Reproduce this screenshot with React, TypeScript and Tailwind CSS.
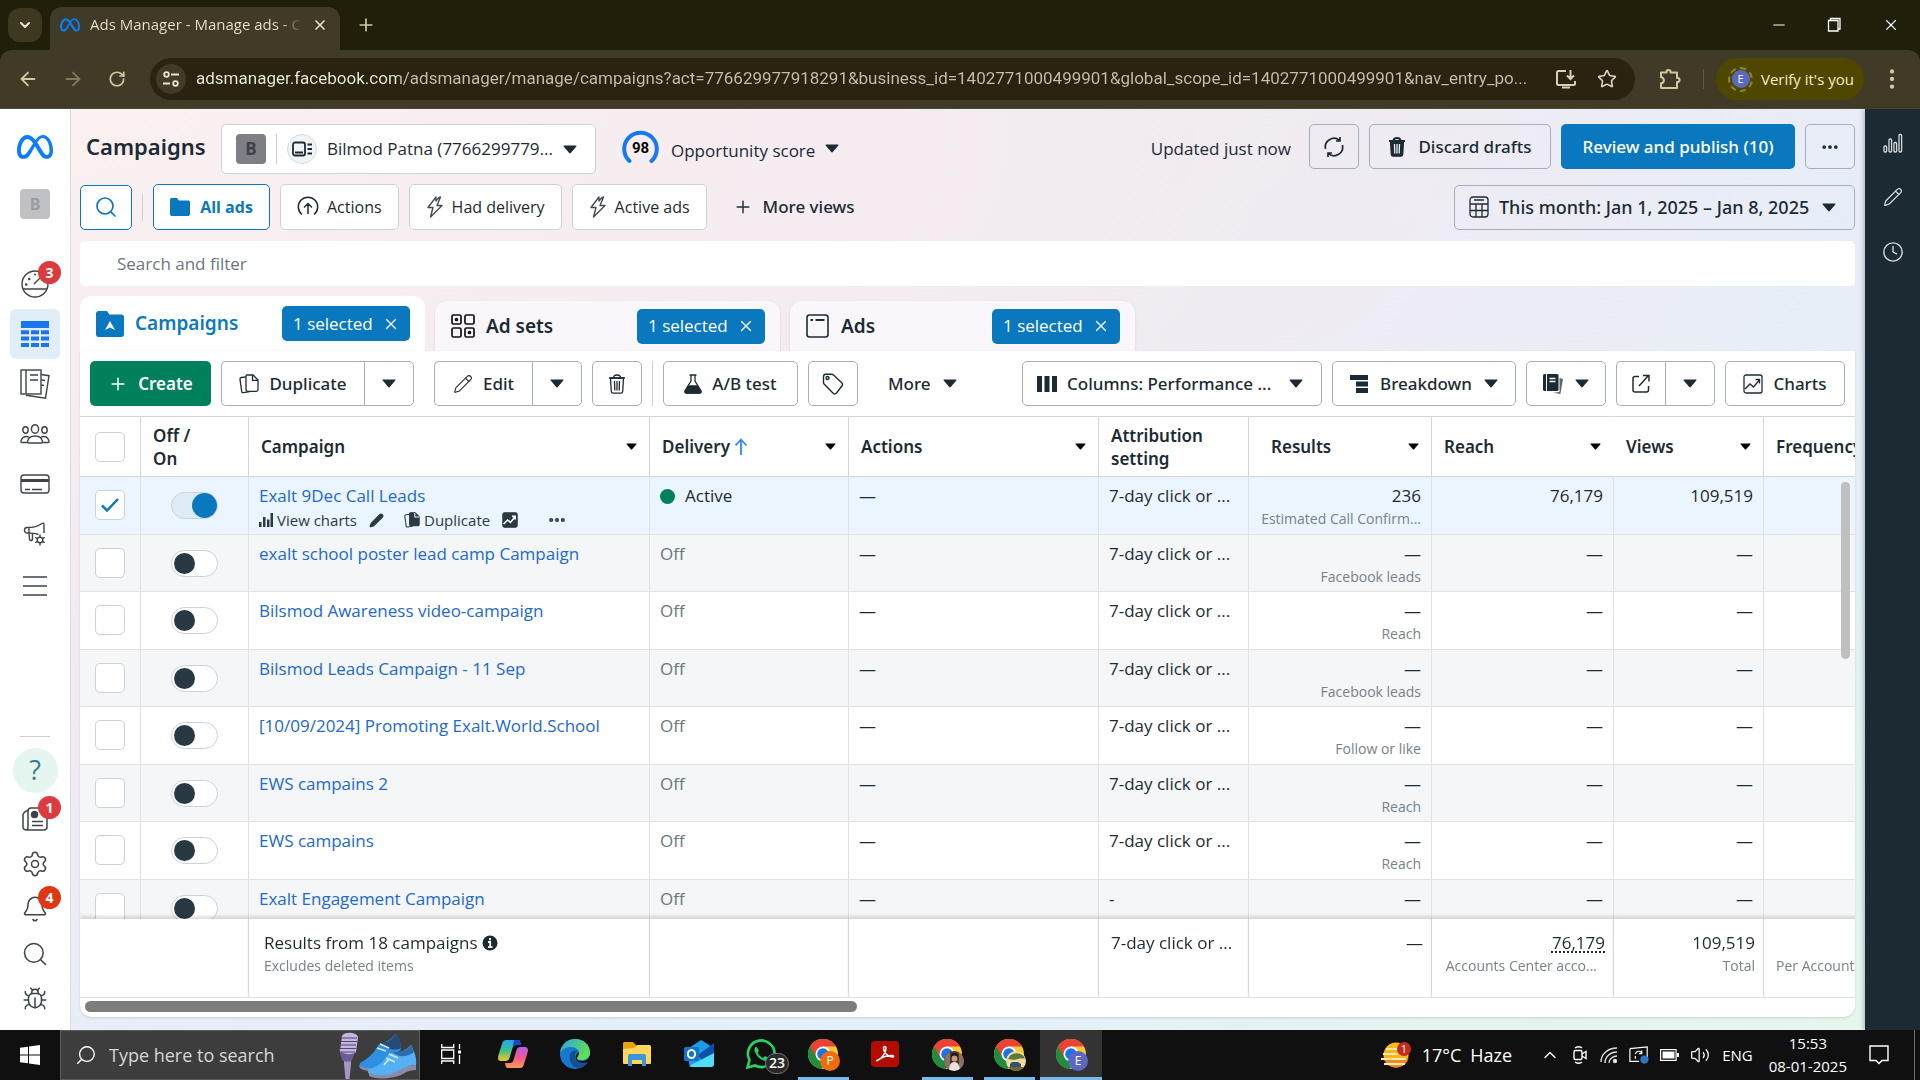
import type { ReactNode } from "react";
import { FaMeta } from "react-icons/fa6";
import {
  ArrowLeft,
  ArrowRight,
  Bell,
  Bug,
  ChevronDown,
  ChevronUp,
  Clock,
  Ellipsis,
  EllipsisVertical,
  Minus,
  Pencil,
  Plus,
  RotateCw,
  Search,
  Settings,
  Star,
  Volume2,
  X,
} from "lucide-react";

type Campaign = {
  name: string;
  active?: boolean;
  attribution: string;
  results: string;
  resultType: string;
  reach: string;
  views: string;
};

const ATTR = "7-day click or ...";

const campaigns: Campaign[] = [
  { name: "Exalt 9Dec Call Leads", active: true, attribution: ATTR, results: "236", resultType: "Estimated Call Confirm...", reach: "76,179", views: "109,519" },
  { name: "exalt school poster lead camp Campaign", attribution: ATTR, results: "—", resultType: "Facebook leads", reach: "—", views: "—" },
  { name: "Bilsmod Awareness video-campaign", attribution: ATTR, results: "—", resultType: "Reach", reach: "—", views: "—" },
  { name: "Bilsmod Leads Campaign - 11 Sep", attribution: ATTR, results: "—", resultType: "Facebook leads", reach: "—", views: "—" },
  { name: "[10/09/2024] Promoting Exalt.World.School", attribution: ATTR, results: "—", resultType: "Follow or like", reach: "—", views: "—" },
  { name: "EWS campains 2", attribution: ATTR, results: "—", resultType: "Reach", reach: "—", views: "—" },
  { name: "EWS campains", attribution: ATTR, results: "—", resultType: "Reach", reach: "—", views: "—" },
  { name: "Exalt Engagement Campaign", attribution: "-", results: "—", resultType: "", reach: "—", views: "—" },
];

function Caret({ small }: { small?: boolean }) {
  return (
    <svg viewBox="0 0 14 9" className={small ? "h-[7px] w-[11px] shrink-0 text-black" : "h-[9px] w-[14px] shrink-0"}>
      <path d="M1.2 0.5h11.6c.6 0 .9.6.5 1L7.8 8c-.4.5-1.200.5-1.600 0L.7 1.500c-.4-.4-.1-1 .5-1z" fill="currentColor" />
    </svg>
  );
}

/* ---------- small drawings ---------- */

function Trash({ dark }: { dark?: boolean }) {
  return (
    <svg viewBox="0 0 18 20" className="h-5 w-[18px]" fill="none" stroke="currentColor" strokeWidth="1.3">
      <path d="M1 4h16M5.500 4c0-2 1-3 3.500-3s3.500 1 3.500 3" strokeWidth={dark ? 2 : 1.300} />
      <path d="M2.500 4l.8 13.500c.1 1 .8 1.700 1.800 1.700h7.800c1 0 1.700-.7 1.800-1.700L15.500 4z" fill={dark ? "currentColor" : "none"} />
      <path d="M6.500 7l.3 9.500M9 7v9.500M11.500 7l-.3 9.500" stroke={dark ? "#eceef8" : "currentColor"} />
    </svg>
  );
}

function Copy({ solid }: { solid?: boolean }) {
  return (
    <svg viewBox="0 0 20 20" className={solid ? "h-4 w-4" : "h-5 w-5"} fill="none" stroke="currentColor" strokeWidth="1.300">
      <path d="M8 1h6l5 5v9.500c0 1-.7 1.800-1.700 1.800H8.800c-1 0-1.800-.8-1.800-1.800V2.500C7 1.500 7.300 1 8 1z" fill={solid ? "currentColor" : "none"} />
      <path d="M13.500 1.300v5H19" stroke={solid ? "#edf5fe" : "currentColor"} />
      <path d="M7 2.800L2.300 3.500C1.300 3.700.9 4.400 1 5.300l1.700 12c.1 1 .8 1.500 1.700 1.400l6.300-1" />
    </svg>
  );
}

function Bolt() {
  return (
    <svg viewBox="0 0 18 22" className="h-[22px] w-[18px]" fill="none" stroke="#3f4c54" strokeWidth="1.400" strokeLinejoin="round">
      <path d="M10 1L2 11.500h5L4.500 21 16 9.500h-5L14.500 1c-1.500 0-3 2-4.500 4z" />
    </svg>
  );
}

function BarsIcon({ className }: { className: string }) {
  return (
    <svg viewBox="0 0 20 20" className={className} fill="none" stroke="currentColor" strokeWidth="1.300">
      <rect x="1" y="13" width="2.600" height="6" rx="1" />
      <rect x="6" y="6" width="2.600" height="13" rx="1" />
      <rect x="11" y="9.500" width="2.600" height="9.500" rx="1" />
      <rect x="16" y="1.500" width="2.600" height="17.500" rx="1" />
    </svg>
  );
}

function Trend({ solid }: { solid?: boolean }) {
  return (
    <svg viewBox="0 0 20 20" className={solid ? "h-4 w-4" : "h-5 w-5"} fill="none" stroke="currentColor" strokeWidth="1.300">
      <rect x="1" y="1" width="18" height="18" rx="2" fill={solid ? "currentColor" : "none"} />
      <path d="M2 15l5-5 3.500 3 5.500-6.500M12.500 5.500h4v4" stroke={solid ? "#fff" : "currentColor"} strokeWidth={solid ? 2 : 1.300} />
    </svg>
  );
}

function Reports() {
  return (
    <svg viewBox="0 0 20 20" className="h-5 w-5">
      <path d="M16.500 4l3.500 1-2.600 15-7-1.200 6.100-.8z" fill="#5a666c" />
      <rect x="0" y="0" width="15.500" height="17" rx="1.500" fill="#1c2b33" />
      <path d="M3.500 0v17" stroke="#fff" />
      <path d="M6.500 4.500h6M6.500 7.500h6" stroke="#fff" strokeWidth="1.300" />
    </svg>
  );
}

/* ---------- browser frame ---------- */

function BrowserBar() {
  return (
    <header className="shrink-0 bg-[#211e0a] font-['Open_Sans','Noto_Sans',sans-serif] text-[#e9e4d0]">
      <div className="flex h-[50px] items-end justify-between">
        <div className="flex items-center">
          <button aria-label="Search tabs" className="mb-2 ml-2 flex h-[34px] w-[34px] items-center justify-center rounded-xl bg-[#3d3921]">
            <ChevronDown className="h-4 w-4" strokeWidth={3} />
          </button>
          <div className="ml-2 flex h-[43px] w-[290px] items-center rounded-t-xl bg-[#403b26] pb-2 pl-2.5">
            <FaMeta className="h-5 w-5 text-[#0a7cff]" />
            <span className="ml-2.5 w-[212px] overflow-hidden bg-[linear-gradient(90deg,#e9e4d0_190px,#403b26_212px)] bg-clip-text text-[15px] whitespace-nowrap text-transparent">
              Ads Manager - Manage ads - Ca
            </span>
            <button aria-label="Close tab" className="ml-2.5">
              <X className="h-4 w-4" strokeWidth={2.5} />
            </button>
          </div>
          <button aria-label="New tab" className="ml-4 pb-2">
            <Plus className="h-5 w-5 text-[#cfc99f]" />
          </button>
        </div>
        <div className="mb-4 flex items-center gap-[38px] pr-5 text-white">
          <button aria-label="Minimize"><Minus className="h-[18px] w-[18px]" strokeWidth={1.5} /></button>
          <button aria-label="Restore">
            <svg viewBox="0 0 18 18" className="h-[18px] w-[18px]" fill="none" stroke="currentColor" strokeWidth="1.300">
              <path d="M2.500 4.500H12v10.500H2.500zM4.500 4.500V2.500H14v10.500h-2" />
            </svg>
          </button>
          <button aria-label="Close window"><X className="h-[18px] w-[18px]" strokeWidth={1.500} /></button>
        </div>
      </div>
      <div className="flex h-[59px] items-center rounded-t-xl border-b border-[#4d4834] bg-[#403b26] text-[#cfc99f]">
        <button aria-label="Back" className="ml-[17px]"><ArrowLeft className="h-[22px] w-[22px]" /></button>
        <button aria-label="Forward" className="ml-[23px] text-[#807a5e]"><ArrowRight className="h-[22px] w-[22px]" /></button>
        <button aria-label="Reload" className="ml-6"><RotateCw className="h-[18px] w-[18px]" strokeWidth={2.300} /></button>
        <div className="ml-6 flex h-[42px] min-w-0 flex-1 items-center rounded-full bg-[#29240f] pr-[18px] pl-1.5">
          <button aria-label="Site information" className="flex h-[30px] w-[30px] shrink-0 items-center justify-center rounded-full bg-[#403b26]">
            <svg viewBox="0 0 18 18" className="h-[18px] w-[18px]" fill="none" stroke="#e9e4d0" strokeWidth="1.800">
              <circle cx="4.500" cy="4.500" r="2.300" />
              <path d="M9 4.500h8M1 13.500h7" />
              <circle cx="13.500" cy="13.500" r="2.300" />
            </svg>
          </button>
          <input
            aria-label="Address and search bar"
            defaultValue="adsmanager.facebook.com/adsmanager/manage/campaigns?act=776629977918291&business_id=1402771000499901&global_scope_id=1402771000499901&nav_entry_po..."
            className="ml-2.5 min-w-0 flex-1 bg-[linear-gradient(90deg,#efebdc_203px,#c5c0a8_203px)] bg-clip-text font-['Roboto',sans-serif] text-[17px] text-transparent outline-none"
          />
          <svg viewBox="0 0 22 22" className="ml-4 h-[22px] w-[22px] shrink-0" fill="none" stroke="#d6d0ba" strokeWidth="2">
            <path d="M11 3H3.500c-.8 0-1.500.6-1.500 1.500v11c0 .8.700 1.500 1.500 1.500h15c.8 0 1.500-.7 1.500-1.500V13M7 19.500h8M15.500 2v8.500M12 7.500l3.500 3.500L19 7.500" />
          </svg>
          <Star className="ml-5 h-5 w-5 shrink-0 text-[#d6d0ba]" />
        </div>
        <button aria-label="Extensions" className="ml-6">
          <svg viewBox="0 0 22 22" className="h-[22px] w-[22px]" fill="none" stroke="currentColor" strokeWidth="2" strokeLinejoin="round">
            <path d="M2 4.500h5.500V3.800c0-2.500 4-2.500 4 0v.7H18v5.500h.7c2.500 0 2.500 4 0 4H18v6H2v-4.700c3.800 0 3.800-6 0-6z" />
          </svg>
        </button>
        <span className="ml-[22px] h-5 w-px bg-[#615b3c]" />
        <button className="ml-3 flex h-[42px] w-[148px] items-center rounded-full bg-[#4f4700] pl-3 text-[15px] text-[#f2ecc8]">
          <span className="flex h-[25px] w-[25px] items-center justify-center rounded-full border-2 border-dashed border-[#8d8430]">
            <span className="flex h-[18px] w-[18px] items-center justify-center rounded-full bg-[#5b67c0] text-[11px] text-white">E</span>
          </span>
          <span className="ml-2 whitespace-nowrap">Verify it's you</span>
        </button>
        <button aria-label="Chrome menu" className="mr-[15px] ml-[15px]"><EllipsisVertical className="h-[26px] w-[26px]" /></button>
      </div>
    </header>
  );
}

/* ---------- left navigation ---------- */

function Badge({ children, color = "bg-[#dd3a40]" }: { children: ReactNode; color?: string }) {
  return (
    <span className={`absolute -top-2 left-[18px] flex h-[23px] w-[23px] items-center justify-center rounded-full text-sm font-bold text-white ${color}`}>
      {children}
    </span>
  );
}

function NavLink({ label, children }: { label: string; children: ReactNode }) {
  return (
    <a href="#" aria-label={label} className="relative flex h-[30px] w-[30px] items-center justify-center">
      {children}
    </a>
  );
}

function SideNav() {
  return (
    <nav className="flex w-[71px] shrink-0 flex-col items-center border-r border-[#d7dbe2] bg-white text-[#3c4448]">
      <FaMeta className="mt-5 h-9 w-9 text-[#0a7cff]" />
      <span className="mt-6 flex h-[30px] w-[30px] items-center justify-center rounded bg-[#c0c1c4] font-bold text-[#9b9ca2]">B</span>
      <div className="mt-[50px] flex flex-col items-center gap-5">
        <NavLink label="Overview">
          <svg viewBox="0 0 30 30" className="h-[30px] w-[30px]" fill="none" stroke="currentColor" strokeWidth="1.400">
            <circle cx="15" cy="15" r="13" />
            <path d="M3 20h24M14 15l6-6" />
            <path d="M5 15.500h2.500M6.200 14.200v2.600M8 10h2.500M9.200 8.700v2.600M14 5.500h2" />
          </svg>
          <Badge>3</Badge>
        </NavLink>
        <a href="#" aria-label="Campaigns" className="-my-2.5 flex h-[50px] w-[50px] items-center justify-center rounded-md bg-[#e1edf7]">
          <svg viewBox="0 0 28 26" className="h-[26px] w-7" fill="#1b74f0">
            <path d="M0 0h28v7H0zM0 9.300h8v4H0zM10 9.300h8v4h-8zM20 9.300h8v4h-8zM0 15.600h8v4H0zM10 15.600h8v4h-8zM20 15.600h8v4h-8zM0 22h8v4H0zM10 22h8v4h-8zM20 22h8v4h-8z" />
          </svg>
        </a>
        <NavLink label="Ads reporting">
          <svg viewBox="0 0 30 30" className="h-[30px] w-[30px]" fill="none" stroke="currentColor" strokeWidth="1.400">
            <rect x="1" y="1" width="20" height="24" />
            <path d="M6 1v24M10 6h8M10 11h8M21 5.500l8 1.200-3.500 22.500L6 26.200M21.500 11l3.500.5M21 16l3 .5" />
          </svg>
        </NavLink>
        <NavLink label="Audiences"><Audience /></NavLink>
        <NavLink label="Billing and payments">
          <svg viewBox="0 0 30 20" className="h-5 w-[30px]" fill="none" stroke="currentColor" strokeWidth="1.400">
            <rect x="1" y="1" width="28" height="18" rx="3" />
            <path d="M1 6.500h28" strokeWidth="3" />
            <path d="M5 15.500h5M12 15.500h10" />
          </svg>
        </NavLink>
        <NavLink label="Advertising settings">
          <svg viewBox="0 0 24 24" className="h-6 w-6" fill="none" stroke="currentColor" strokeWidth="1.400">
            <path d="M15.500 12.500C12 11 8 11 4 11c-1.500 0-2.500-1-2.500-2.800S2.500 5.500 4 5.500c6 0 11-1 14-3.500 2-1.500 3-1 3 1v8M6 5.500V11M6 11l.5 6c.1 2 3 2 3 0V11" />
            <circle cx="17" cy="18" r="2.800" />
            <path d="M17 12.500v2.700M17 20.800v2.700M12.300 15.300l2.300 1.300M19.400 19.400l2.300 1.300M12.300 20.700l2.300-1.300M19.400 16.600l2.300-1.300" />
          </svg>
        </NavLink>
        <NavLink label="All tools">
          <svg viewBox="0 0 24 20" className="mt-1 h-5 w-6" stroke="currentColor" strokeWidth="1.500"><path d="M0 1h24M0 10h24M0 19h24" /></svg>
        </NavLink>
      </div>
      <div className="mt-auto mb-4 flex flex-col items-center gap-[15px]">
        <span className="h-px w-[30px] bg-[#c9ced8]" />
        <a href="#" aria-label="Help" className="-my-1 flex h-[45px] w-[45px] items-center justify-center rounded-full bg-[#e5f5f0] text-[27px] text-[#33808a]">?</a>
        <NavLink label="News">
          <svg viewBox="0 0 26 24" className="h-6 w-[26px]" fill="none" stroke="currentColor" strokeWidth="1.500">
            <path d="M6 4c0-2 1-3 3-3h12c3 0 4 1 4 3v16c0 2-1 3-3 3H5c-3 0-4-1-4-3V8c0-2 2-3 5-5v17c0 2-1 3-2 3M10 14.500h11M10 18.500h11" />
            <circle cx="12.500" cy="7.500" r="3" fill="currentColor" />
          </svg>
          <Badge>1</Badge>
        </NavLink>
        <NavLink label="Settings"><Settings className="h-7 w-7" strokeWidth={1.300} /></NavLink>
        <NavLink label="Notifications"><Bell className="h-7 w-7" strokeWidth={1.300} /><Badge color="bg-[#dd3714]">4</Badge></NavLink>
        <NavLink label="Search"><Search className="h-7 w-7" strokeWidth={1.300} /></NavLink>
        <NavLink label="Report a problem"><Bug className="h-[26px] w-[26px]" strokeWidth={1.400} /></NavLink>
      </div>
    </nav>
  );
}

function Audience() {
  return (
    <svg viewBox="0 0 30 20" className="h-5 w-[30px]" fill="none" stroke="currentColor" strokeWidth="1.400">
      <ellipse cx="15" cy="5" rx="3.600" ry="4.200" />
      <ellipse cx="5.500" cy="6" rx="2.700" ry="3.200" />
      <ellipse cx="24.500" cy="6" rx="2.700" ry="3.200" />
      <path d="M8.500 19c-.8 0-1.200-.5-1-1.300.6-3.700 3-5.700 7.500-5.700s6.900 2 7.500 5.700c.2.800-.2 1.300-1 1.300zM7 18.500H2c-1 0-1.300-.5-1-1.300.7-3 2.500-4.700 5.500-4.700.8 0 1.500.2 2.200.5M23 18.500h5c1 0 1.300-.5 1-1.300-.7-3-2.500-4.700-5.500-4.700-.8 0-1.500.2-2.200.5" />
    </svg>
  );
}

/* ---------- page header ---------- */

const outline = "flex h-[45px] items-center justify-center rounded-[5px] border border-[#a3afba] whitespace-nowrap";
const viewBtn = "flex h-[46px] items-center gap-2 rounded-[5px] border border-[#cbd2d9] bg-white px-4 text-base whitespace-nowrap";
const heading = "font-['Noto_Sans','Open_Sans',sans-serif]";

function PageHeader() {
  return (
    <div className="flex flex-col">
      <div className="flex h-[50px] items-start">
        <h1 className={`${heading} w-[141px] pt-1.5 pl-1.5 text-[22px] font-semibold`}>Campaigns</h1>
        <div className="flex h-[50px] w-[375px] items-center rounded-[5px] border border-[#cbd2d9] bg-white px-3.5 text-[17px]">
          <span className="flex h-[30px] w-[30px] shrink-0 items-center justify-center rounded bg-[#7d7f84] font-bold text-[#3f424a]">B</span>
          <span className="mx-2.5 h-[30px] w-px shrink-0 bg-[#c5ccd5]" />
          <span className="flex h-[30px] w-[30px] shrink-0 items-center justify-center rounded-full border border-[#d5dbe1] bg-[#f1f4f7]">
            <svg viewBox="0 0 20 16" className="h-4 w-5" fill="none" stroke="#1c2b33" strokeWidth="1.800">
              <rect x="1" y="1.500" width="12" height="13" rx="2" />
              <path d="M3 11.500h8M15.500 3.500H20M15.500 8H20M15.500 12.500H20" strokeWidth="1.800" />
            </svg>
          </span>
          <select aria-label="Ad account" className="ml-2.5 min-w-0 flex-1 appearance-none outline-none">
            <option>Bilmod Patna (7766299779...</option>
          </select>
          <span className="mr-1 ml-2"><Caret /></span>
        </div>
        <button className="mt-1.5 ml-[26px] flex items-center text-[17px]">
          <span className="grid h-[37px] w-[37px] place-items-center">
            <svg viewBox="0 0 37 37" className="col-start-1 row-start-1 h-[37px] w-[37px]" fill="none" stroke="#1877f2" strokeWidth="4" strokeLinecap="round">
              <path d="M7.500 31a16.300 16.300 0 1 1 22 0" />
            </svg>
            <span className="col-start-1 row-start-1 font-['Roboto',sans-serif] text-[15px] font-bold text-black">98</span>
          </span>
          <span className="mt-1 ml-3">Opportunity score</span>
          <span className="ml-2.5"><Caret /></span>
        </button>
        <span className="mr-[18px] ml-auto pt-3 text-[17px]">Updated just now</span>
        <div className={`${heading} flex gap-2.5 text-[17px] font-medium`}>
          <button aria-label="Refresh" className={`${outline} w-[50px]`}>
            <svg viewBox="0 0 22 22" className="h-[22px] w-[22px]" fill="none" stroke="currentColor" strokeWidth="1.700">
              <path d="M2.600 13A8.600 8.600 0 0 1 16.500 4.400M17 1v4h-4" />
              <path d="M19.400 9A8.600 8.600 0 0 1 5.500 17.600M5 21v-4h4" />
            </svg>
          </button>
          <button className={`${outline} w-[182px] gap-3`}><Trash dark /> Discard drafts</button>
          <button className="flex h-[45px] w-[234px] items-center justify-center rounded-[5px] bg-[#0a78be] whitespace-nowrap text-white">
            Review and publish (10)
          </button>
          <button aria-label="More options" className={`${outline} w-[50px]`}><Ellipsis className="h-5 w-5" strokeWidth={2.500} /></button>
        </div>
      </div>

      <div className="mt-2.5 flex items-center">
        <button aria-label="Search views" className="flex h-[45px] w-[52px] items-center justify-center rounded-[5px] border border-[#0a78be] bg-white text-[#0a78be]">
          <Search className="h-6 w-6" strokeWidth={1.700} />
        </button>
        <span className="mx-2.5 h-[27px] w-px bg-[#ccd2da]" />
        <div className="flex gap-2.5">
          <button className="flex h-[46px] w-[117px] items-center justify-center gap-2.5 rounded-[5px] border border-[#0a78be] bg-white text-base font-bold whitespace-nowrap text-[#0a78be]">
            <svg viewBox="0 0 20 18" className="h-[18px] w-5" fill="currentColor"><path d="M0 2c0-1 .5-2 1.500-2H7l2 2.500h9.500c1 0 1.500.8 1.500 1.700V16c0 1-.7 2-1.700 2H1.700C.7 18 0 17 0 16z" /></svg>
            All ads
          </button>
          <button className={viewBtn}>
            <svg viewBox="0 0 22 22" className="h-[22px] w-[22px]" fill="none" stroke="currentColor" strokeWidth="1.500">
              <path d="M5 18.500a9.700 9.700 0 1 1 12 0M11 18V8M7 11.500L11 7.500l4 4" />
            </svg>
            Actions
          </button>
          <button className={viewBtn}><Bolt /> Had delivery</button>
          <button className={viewBtn}><Bolt /> Active ads</button>
          <button className={`${heading} ml-4 flex items-center gap-2.5 text-[17px] font-medium`}><Plus className="h-5 w-5" strokeWidth={1.700} /> More views</button>
        </div>
        <div className={`${outline} ${heading} ml-auto w-[401px] gap-2.5 px-3.5 text-lg font-medium`}>
          <svg viewBox="0 0 20 22" className="h-[22px] w-5 shrink-0" fill="none" stroke="currentColor" strokeWidth="1.300">
            <rect x="1" y="1" width="18" height="20" rx="3" />
            <path d="M5 4h10M1 8h18M1 14.500h18M7 8v13M13 8v13" />
          </svg>
          <select aria-label="Date range" className="min-w-0 flex-1 appearance-none outline-none">
            <option>This month: Jan 1, 2025 – Jan 8, 2025</option>
          </select>
          <span className="mr-1"><Caret /></span>
        </div>
      </div>

      <input
        aria-label="Search and filter"
        placeholder="Search and filter"
        className="mt-[11px] h-[45px] w-full rounded-[5px] bg-white pl-[37px] text-[17px] outline-none placeholder:text-[#6b7780]"
      />
    </div>
  );
}

function LevelTab({ label, icon, current }: { label: string; icon: ReactNode; current?: boolean }) {
  return (
    <div className={`flex w-[345px] items-center rounded-t-xl pr-[15px] pl-4 ${current ? "h-[55px] bg-white text-[#0a78be]" : "h-[50px] bg-[#f9f7fb] shadow-sm"}`}>
      <button className={`${heading} flex items-center gap-[11px] text-[19px] font-semibold`}>{icon} {label}</button>
      <span className="ml-auto flex h-[35px] w-[128px] items-center justify-between rounded-[5px] bg-[#0a78be] pr-2.5 pl-[11px] text-[17px] text-white">
        1 selected
        <button aria-label={`Clear ${label} selection`}><X className="h-[18px] w-[18px]" strokeWidth={1.800} /></button>
      </span>
    </div>
  );
}

function Tabs() {
  return (
    <div className="mt-2.5 flex items-end gap-2.5">
      <LevelTab
        current
        label="Campaigns"
        icon={
          <svg viewBox="0 0 28 26" className="h-[26px] w-7">
            <path d="M0 2.500C0 1 1 0 2.500 0H11l2.500 3.500h12c1.500 0 2.500 1 2.500 2.500v17.500c0 1.500-1 2.500-2.500 2.500h-23C1 26 0 25 0 23.500z" fill="#0a78be" />
            <path d="M14 10l5 9-5-2.500L9 19z" fill="#fff" />
          </svg>
        }
      />
      <LevelTab
        label="Ad sets"
        icon={
          <svg viewBox="0 0 24 24" className="h-6 w-6" fill="none" stroke="#111" strokeWidth="1.700">
            <rect x="1" y="1" width="9" height="9" rx="1.500" />
            <rect x="14" y="1" width="9" height="9" rx="1.500" />
            <rect x="1" y="14" width="9" height="9" rx="1.500" />
            <rect x="14" y="14" width="9" height="9" rx="1.500" />
            <circle cx="5.500" cy="5.500" r="1" />
            <circle cx="18.500" cy="18.500" r="1" />
          </svg>
        }
      />
      <LevelTab
        label="Ads"
        icon={
          <svg viewBox="0 0 24 24" className="h-6 w-6" fill="none" stroke="#1c2b33" strokeWidth="1.600">
            <rect x="1" y="1" width="21" height="22" rx="2.500" />
            <path d="M4.500 6h2.500M9.500 6h9" strokeWidth="2" />
          </svg>
        }
      />
    </div>
  );
}

/* ---------- toolbar ---------- */

function SplitButton({ label, children, width }: { label: string; children: ReactNode; width: string }) {
  return (
    <div className="flex">
      <button className={`${outline} ${width} gap-2.5 rounded-r-none border-r-0`}>{children}</button>
      <button aria-label={label} className={`${outline} w-[50px] rounded-l-none`}><Caret /></button>
    </div>
  );
}

function Toolbar() {
  return (
    <div className={`${heading} flex items-center gap-2.5 px-2.5 pt-2.5 pb-2.5 text-[17px] font-medium`}>
      <button className="flex h-[45px] w-[121px] items-center justify-center gap-2.5 rounded-[5px] bg-[#00805b] font-semibold text-white">
        <Plus className="h-5 w-5" strokeWidth={1.800} /> Create
      </button>
      <SplitButton label="Duplicate options" width="w-[143px]"><Copy /> Duplicate</SplitButton>
      <div className="ml-2.5">
        <SplitButton label="Edit options" width="w-[98px]"><Pencil className="h-5 w-5" strokeWidth={1.300} /> Edit</SplitButton>
      </div>
      <button aria-label="Delete" className={`${outline} w-[50px]`}><Trash /></button>
      <span className="h-[45px] w-px bg-[#ccd2da]" />
      <button className={`${outline} w-[135px] gap-2.5`}>
        <svg viewBox="0 0 18 20" className="h-5 w-[18px]" fill="none" stroke="currentColor" strokeWidth="1.300">
          <path d="M5.500 1h7M7 1v6L1.200 16.500c-.8 1.400 0 2.500 1.500 2.500h12.600c1.500 0 2.300-1.100 1.500-2.500L11 7V1" />
          <path d="M4.500 12h9l3.300 5c.5 1 0 2-1 2H2.200c-1 0-1.500-1-1-2z" fill="currentColor" />
        </svg>
        A/B test
      </button>
      <button aria-label="Tags" className={`${outline} w-[50px]`}>
        <svg viewBox="0 0 22 22" className="h-[22px] w-[22px]" fill="none" stroke="currentColor" strokeWidth="1.400" strokeLinejoin="round">
          <path d="M1.500 3.500c0-1.500.8-2.300 2.200-2.300h5.500c1 0 1.600.2 2.300.9l8 7.400c1.200 1.100 1.300 2.300.4 3.500l-5.400 7c-1 1.200-2.300 1.200-3.300.2l-8.700-8.700c-.7-.7-1-1.300-1-2.300z" />
          <circle cx="5.500" cy="5" r="1.500" />
        </svg>
      </button>
      <button className="ml-5 flex items-center gap-3">More <Caret /></button>
      <div className={`${outline} ml-auto w-[300px] gap-2.5 px-3.5`}>
        <svg viewBox="0 0 20 16" className="h-4 w-5 shrink-0" fill="currentColor"><path d="M0 0h5v16H0zM7.500 0h5v16h-5zM15 0h5v16h-5z" /></svg>
        <select aria-label="Columns" className="min-w-0 flex-1 appearance-none outline-none">
          <option>Columns: Performance ...</option>
        </select>
        <span className="mr-1"><Caret /></span>
      </div>
      <button className={`${outline} w-[184px] gap-3`}>
        <svg viewBox="0 0 18 18" className="h-[18px] w-[18px]" fill="currentColor"><path d="M0 0h18v5H0zM6 6.500h12v5H6zM6 13h12v5H6z" /></svg>
        Breakdown <Caret />
      </button>
      <button aria-label="Reports" className={`${outline} w-20 gap-3`}><Reports /> <Caret /></button>
      <SplitButton label="Export options" width="w-[49px]">
        <svg viewBox="0 0 20 20" role="img" aria-label="Export" className="h-5 w-5" fill="none" stroke="currentColor" strokeWidth="1.500">
          <path d="M8 2.500H4c-1.200 0-2 .8-2 2V16c0 1.200.8 2 2 2h11.500c1.200 0 2-.8 2-2v-4M8 12l9.500-10.500M12 1.500h6v6" />
        </svg>
      </SplitButton>
      <button className={`${outline} w-[120px] gap-2.5`}><Trend /> Charts</button>
    </div>
  );
}

/* ---------- campaigns table ---------- */

const thBase = "sticky top-0 z-10 h-[61px] border-y border-r border-[#d2d5d9] bg-white text-left align-middle leading-[23px] font-semibold";
const th = `${thBase} px-3`;
const td = "border-r border-b border-[#dfe2e5] px-2.5 pt-[7px] align-top";
const tf = "sticky bottom-0 z-10 h-[79px] border-r border-b border-[#dfe2e5] bg-white px-2 pt-3 align-top leading-6 shadow-[0_-3px_3px_rgba(0,0,0,0.13)]";
const sub = "block text-sm leading-[22px] text-[#77828a]";

function HeadCell({ label, sorted, noLine }: { label: string; sorted?: boolean; noLine?: boolean }) {
  return (
    <th className={`${th} ${noLine ? "border-r-transparent" : ""}`}>
      <span className="flex items-center justify-between">
        <span className="flex items-center gap-1">
          {label}
          {sorted && (
            <svg viewBox="0 0 14 18" className="h-[18px] w-3.5" fill="none" stroke="#2d88ff" strokeWidth="1.800"><path d="M7 17V2M1.500 7.500L7 1.500l5.500 6" /></svg>
          )}
        </span>
        <Caret small />
      </span>
    </th>
  );
}

function RowCheckbox({ label, checked }: { label: string; checked?: boolean }) {
  return (
    <span className="grid place-items-center">
      <input type="checkbox" aria-label={label} defaultChecked={checked} className="col-start-1 row-start-1 h-[30px] w-[30px] appearance-none rounded-[5px] border border-[#ccd1dc] bg-white" />
      {checked && (
        <svg viewBox="0 0 20 16" className="pointer-events-none col-start-1 row-start-1 h-4 w-5" fill="none" stroke="#0a78be" strokeWidth="2.500"><path d="M2 8.500l5 5L18 2" /></svg>
      )}
    </span>
  );
}

function Toggle({ label, on }: { label: string; on?: boolean }) {
  return (
    <input
      type="checkbox"
      role="switch"
      aria-label={label}
      defaultChecked={on}
      className="flex h-[27px] w-[47px] appearance-none items-center rounded-full border border-[#ccd1dc] bg-white px-0.5 before:h-[21px] before:w-[21px] before:rounded-full before:bg-[#283943] checked:justify-end checked:bg-[#deebf6] checked:px-0 checked:before:h-[25px] checked:before:w-[25px] checked:before:bg-[#0a78be]"
    />
  );
}

function CampaignRow({ c, index }: { c: Campaign; index: number }) {
  const bg = c.active ? "bg-[#ebf5ff]" : index % 2 ? "bg-[#f4f6f8]" : "bg-white";
  return (
    <tr className={`${bg} ${index % 2 ? "h-[57px]" : "h-[58px]"} leading-6`}>
      <td className={`${td} px-0 pt-[13px]`}><RowCheckbox label={`Select ${c.name}`} checked={c.active} /></td>
      <td className={`${td} pt-[15px] pl-[30px]`}><Toggle label={`Turn on ${c.name}`} on={c.active} /></td>
      <td className={td}>
        <a href="#" className="block truncate text-[#2168d1]">{c.name}</a>
        {c.active && (
          <div className="flex items-center text-[15px] leading-6 text-[#2b3a42]">
            <button className="flex items-center gap-1">
              <svg viewBox="0 0 14 14" className="h-3.5 w-3.5" fill="currentColor"><path d="M0 9h2.500v5H0zM4 4h2.500v10H4zM8 6.500h2.500V14H8zM11.500 0H14v14h-2.500z" /></svg>
              View charts
            </button>
            <button aria-label="Edit" className="ml-3"><Pencil className="h-[15px] w-[15px]" fill="currentColor" /></button>
            <button className="ml-5 flex items-center gap-1"><Copy solid /> Duplicate</button>
            <button aria-label="Open trends" className="ml-3"><Trend solid /></button>
            <button aria-label="More actions" className="ml-[29px]"><Ellipsis className="h-5 w-5" strokeWidth={3} /></button>
          </div>
        )}
      </td>
      <td className={td}>
        {c.active ? (
          <span className="flex items-center gap-2.5"><span className="h-[15px] w-[15px] rounded-full bg-[#00805b]" /> Active</span>
        ) : (
          <span className="text-[#6b7780]">Off</span>
        )}
      </td>
      <td className={td}>—</td>
      <td className={`${td} whitespace-nowrap`}>{c.attribution}</td>
      <td className={`${td} text-right whitespace-nowrap`}>
        {c.results}
        <span className={sub}>{c.resultType}</span>
      </td>
      <td className={`${td} text-right`}>{c.reach}</td>
      <td className={`${td} text-right`}>{c.views}</td>
      <td className={td} />
    </tr>
  );
}

function CampaignTable() {
  return (
    <div className="relative flex min-h-0 flex-1 flex-col">
      <div className="min-h-0 flex-1 overflow-hidden">
        <table className="w-[calc(100%+60px)] table-fixed border-separate border-spacing-0 text-[17px]">
          <colgroup>
            <col className="w-[61px]" />
            <col className="w-[108px]" />
            <col />
            <col className="w-[199px]" />
            <col className="w-[250px]" />
            <col className="w-[150px]" />
            <col className="w-[183px]" />
            <col className="w-[182px]" />
            <col className="w-[150px]" />
            <col className="w-[151px]" />
          </colgroup>
          <thead className={heading}>
            <tr>
              <th className={thBase}><RowCheckbox label="Select all campaigns" /></th>
              <th className={th}>Off /<br />On</th>
              <HeadCell label="Campaign" />
              <HeadCell label="Delivery" sorted />
              <HeadCell label="Actions" />
              <th className={th}>Attribution setting</th>
              <th className={th}>
                <span className="flex items-center justify-between pl-2.5">Results <Caret small /></span>
              </th>
              <HeadCell label="Reach" noLine />
              <HeadCell label="Views" />
              <HeadCell label="Frequency" />
            </tr>
          </thead>
          <tbody>
            {campaigns.map((c, i) => (
              <CampaignRow key={c.name} c={c} index={i} />
            ))}
          </tbody>
          <tfoot>
            <tr>
              <td colSpan={2} className={tf} />
              <td className={tf}>
                <span className="flex items-center gap-1 pl-[7px]">
                  Results from 18 campaigns
                  <svg viewBox="0 0 16 16" className="h-4 w-4">
                    <circle cx="8" cy="8" r="7.500" fill="#1c2b33" />
                    <path d="M8 3v2.200M6 7h2.200v5M6 12.200h4.500" stroke="#fff" strokeWidth="1.800" fill="none" />
                  </svg>
                </span>
                <span className={`${sub} pl-[7px]`}>Excludes deleted items</span>
              </td>
              <td className={tf} />
              <td className={tf} />
              <td className={`${tf} pl-3 whitespace-nowrap`}>{ATTR}</td>
              <td className={`${tf} text-right`}>—</td>
              <td className={`${tf} text-right whitespace-nowrap`}>
                <span className="underline decoration-dotted decoration-2 underline-offset-2">76,179</span>
                <span className={`${sub} pr-2`}>Accounts Center acco...</span>
              </td>
              <td className={`${tf} text-right`}>109,519<span className={sub}>Total</span></td>
              <td className={`${tf} pl-3 whitespace-nowrap`}>&nbsp;<span className={sub}>Per Accounts Ce...</span></td>
            </tr>
          </tfoot>
        </table>
      </div>
      <span className="absolute top-[66px] right-[5px] z-20 h-[177px] w-[9px] rounded-full bg-[#bfbfbf]" />
      <div className="h-[19px] shrink-0 px-[5px] pt-[3px]">
        <div className="h-[11px] w-7/16 rounded-full bg-[#7d7d7d]" />
      </div>
    </div>
  );
}

/* ---------- taskbar ---------- */

function Chrome({ badge }: { badge?: ReactNode }) {
  return (
    <span className="relative">
      <svg viewBox="0 0 32 32" className="h-[30px] w-[30px]">
        <circle cx="16" cy="16" r="16" fill="#fcc934" />
        <path d="M16 16L2.100 8A16 16 0 0 0 14.500 31.900L22.900 20z" fill="#1e8e3e" />
        <path d="M2.100 8A16 16 0 0 1 29.900 8H16l-6.900 12z" fill="#ea4335" />
        <circle cx="16" cy="16" r="8" fill="#fff" />
        <circle cx="16" cy="16" r="6.200" fill="#1a73e8" />
      </svg>
      {badge}
    </span>
  );
}

function TaskApp({ label, open, current, children }: { label: string; open?: boolean; current?: boolean; children: ReactNode }) {
  return (
    <button aria-label={label} className={`flex h-full w-[62px] flex-col items-center ${current ? "bg-[#333]" : ""}`}>
      <span className="flex flex-1 items-center">{children}</span>
      <span className={`h-[3px] ${current ? "w-full" : "w-[51px]"} ${open ? "bg-[#76b9ed]" : ""}`} />
    </button>
  );
}

const profile = "absolute top-3 left-3 flex h-5 w-5 items-center justify-center overflow-hidden rounded-full text-xs text-white";

function Taskbar() {
  return (
    <footer className="flex h-[50px] shrink-0 items-stretch bg-[#101010] font-['Open_Sans','Noto_Sans',sans-serif] text-white">
      <button aria-label="Start" className="flex w-[60px] items-center justify-center">
        <svg viewBox="0 0 20 20" className="h-5 w-5" fill="#fff"><path d="M0 2.800l8-1.100v7.800H0zM9 1.600L20 0v9.500H9zM0 10.500h8v7.800l-8-1.100zM9 10.500h11V20L9 18.400z" /></svg>
      </button>
      <label className="flex w-[360px] items-center border border-[#5a5a5a] bg-[#3d3d3d] pl-3.5">
        <Search className="h-[22px] w-[22px] -scale-x-100" strokeWidth={1.500} />
        <input aria-label="Type here to search" placeholder="Type here to search" className="ml-3 w-[190px] text-lg outline-none placeholder:text-[#d6d6d6]" />
        <svg viewBox="0 0 84 48" className="ml-auto h-12 w-[84px]">
          <path d="M9 29h7v4l-1.500 15h-4L9 33z" fill="#a596c8" />
          <path d="M4 18l16 3-3 8c-1 2-8 2-10 0z" fill="#6d5a96" />
          <path d="M7 5c2-5 15-4 16 1l-2 15c-2 3-13 3-16-1z" fill="#c3b7e0" />
          <path d="M7 7h15M6 10.500h16M6 14h15M5 17.500h16M6 21h14" stroke="#56447c" strokeWidth="1.200" />
          <path d="M25 32c8-4 15-11 19-19 7-1 12-5 17-10 3 3 5 9 5 15l-7 9-12 9c-8 4-20 4-23 0z" fill="#2f8fe0" />
          <path d="M46 12c6 0 11-4 15-9 3 3 5 8 5 14-6 3-13 2-20-5z" fill="#274a78" />
          <path d="M26 35c4 3 14 3 22-1l1 3c-8 4-20 4-24 0z" fill="#8d8aa8" />
          <path d="M34 38c9-2 16-8 20-16 9 1 16-2 22-8 4 7 6 15 5 20-5 0-10 2-15 5-8 5-19 7-27 6-5-1-8-4-5-7z" fill="#55b0f3" />
          <path d="M57 21c8 1 15-2 19-7l3 7c-6 5-15 6-22 0z" fill="#2c6cae" />
          <path d="M34 42c10 4 24 2 33-4 5-3 10-4 14-4v5c-4 0-9 1-13 4-10 5-28 6-34 2z" fill="#8d8aa8" />
          <path d="M42 17l9 3M45 13l9 4M51 27l9 4M54 23l9 4M49 34l5-6" stroke="#d5e9fa" strokeWidth="1.500" />
        </svg>
      </label>
      <TaskApp label="Task view">
        <svg viewBox="0 0 20 20" className="h-5 w-5" fill="none" stroke="#fff" strokeWidth="1.300">
          <path d="M.7 0v3.500h12V0M.7 6h12v8.500H.7zM.7 20v-3h12v3M18.500 0v5M18.500 11v9" />
          <path d="M17 6.500h3v3h-3z" fill="#fff" stroke="none" />
        </svg>
      </TaskApp>
      <TaskApp label="Copilot">
        <svg viewBox="0 0 30 28" className="h-7 w-[30px]">
          <defs>
            <linearGradient id="cpA" x1="0" y1="0" x2="0" y2="1"><stop stopColor="#1ea7f5" /><stop offset=".5" stopColor="#3fbf8d" /><stop offset="1" stopColor="#f4c71e" /></linearGradient>
            <linearGradient id="cpB" x1="0" y1="0" x2="0" y2="1"><stop stopColor="#b25ce8" /><stop offset=".5" stopColor="#f4588c" /><stop offset="1" stopColor="#ff9a55" /></linearGradient>
          </defs>
          <path d="M8 0h12c2 0 2.500 2 3 5h-5c-2 0-3 1-3.500 3l-3 10c-.6 2-2 3-4 3H3c-3 0-3.500-3-2.500-6L4 4c1-3 2-4 4-4z" fill="url(#cpA)" />
          <path d="M16 0h4c2 0 2.500 2 3 5h-5c-2 0-3 1-3.500 2z" fill="#1847c8" />
          <path d="M22 28H10c-2 0-2.500-2-3-5h5c2 0 3-1 3.500-3l3-10c.6-2 2-3 4-3H27c3 0 3.500 3 2.500 6L26 24c-1 3-2 4-4 4z" fill="url(#cpB)" />
        </svg>
      </TaskApp>
      <TaskApp label="Edge">
        <svg viewBox="0 0 30 30" className="h-[30px] w-[30px]">
          <defs>
            <linearGradient id="edgeT" x1="0" y1="0" x2="1" y2=".5"><stop stopColor="#2aa8e8" /><stop offset="1" stopColor="#62dd53" /></linearGradient>
          </defs>
          <circle cx="15" cy="15" r="15" fill="#1679cf" />
          <path d="M0 14C1 6 7 0 15 0c9 0 15 6 15 13 0 5-4 8-8 8-3 0-5-1-5-2s2-2 2-5c0-3-3-6-8-6-5 0-9 2-11 6z" fill="url(#edgeT)" />
          <path d="M10 15c-2 8 3 14 9 14 5-1 8-4 9-6-5 3-13 1-13-6 0-3 1-4 3-5-4-1-7 0-8 3z" fill="#124f93" />
          <path d="M30 14c0 5-4 8-8 8-3 0-5-1-5-2.500 0-1 2-2 2-5V13c-2 1-4 4-3 7 1 4 8 5 12 3 2-2 2-5 2-9z" fill="#101010" />
          <path d="M30 11v4c-1 4-4 6-8 6-3 0-5-1-5-2s2-2 2-5c4 2 8 1 11-3z" fill="#5fdc63" />
        </svg>
      </TaskApp>
      <TaskApp label="File Explorer">
        <svg viewBox="0 0 28 24" className="h-6 w-7">
          <path d="M0 1.500C0 .6.600 0 1.500 0H10l3 3v6H0z" fill="#e8a30c" />
          <path d="M0 7l11-1 3-3h12c1 0 2 .7 2 1.500V21c0 .6-.4 1-1 1H1c-.6 0-1-.4-1-1z" fill="#ffd65c" />
          <path d="M5 24V14c0-1.300 1-2 2-2h14c1 0 2 .7 2 2v10h-4v-6H9v6z" fill="#3b95da" />
        </svg>
      </TaskApp>
      <TaskApp label="Outlook">
        <svg viewBox="0 0 30 27" className="h-[27px] w-[30px]">
          <path d="M5 8L17 0l13 8v15c0 2-1 3-3 3H8c-2 0-3-1-3-3z" fill="#1c9be8" />
          <path d="M14 15L30 3v11L18 21z" fill="#0f4fa8" />
          <path d="M5 26l25-13v11c0 2-1 3-3 3H7z" fill="#4fdcfa" />
          <rect x="0" y="7" width="15" height="14" rx="1.500" fill="#1173ca" />
          <ellipse cx="7.500" cy="14" rx="3.600" ry="4" fill="none" stroke="#fff" strokeWidth="2" />
        </svg>
      </TaskApp>
      <TaskApp label="WhatsApp">
        <span className="relative">
          <svg viewBox="0 0 30 30" className="h-[30px] w-[30px]">
            <path d="M1.500 28.500l2-7.500A13.300 13.300 0 1 1 9 26.500z" fill="none" stroke="#25d366" strokeWidth="2.600" />
            <path d="M10.500 7.500c-2 1-2.500 3-1.500 5.500 1.500 4 4.500 7 8.500 8.500 2.500 1 4.500 0 5-2.500l-3.500-2-2 2c-2.500-1-4.500-3-5.500-5.500l1.500-1.500z" fill="#25d366" />
          </svg>
          <span className="absolute top-3.5 left-[19px] flex h-[21px] w-6 items-center justify-center rounded-full border border-[#777] bg-[#2a2a2a] text-sm font-semibold">23</span>
        </span>
      </TaskApp>
      <TaskApp label="Chrome, profile P" open><Chrome badge={<span className={`${profile} bg-[#ee6c0b]`}>P</span>} /></TaskApp>
      <TaskApp label="Acrobat">
        <svg viewBox="0 0 28 26" className="h-[26px] w-7">
          <rect width="28" height="26" rx="4" fill="#b30b00" />
          <path d="M7 19c4-1 8-8 8-12 0-2-2.500-2-2.500 0 0 4 4 9 9 9 1.500 0 1.500-1.500 0-1.500-5 0-11 2-14.500 4.500-1.500 1.500-2 .5 0 0z" fill="none" stroke="#fff" strokeWidth="1.500" />
        </svg>
      </TaskApp>
      <TaskApp label="Chrome, second profile" open>
        <Chrome
          badge={
            <svg viewBox="0 0 20 20" className={`${profile} bg-[#4a352d]`}>
              <path d="M0 0h6v20H0zM15 0h5v20h-5z" fill="#8a705f" />
              <path d="M7 5c0-4 7-4 7 0v3H7z" fill="#1d1512" />
              <circle cx="10.500" cy="7.500" r="3" fill="#c99c80" />
              <path d="M5 20c0-6 2-9 5.500-9s5.500 4 5.500 9z" fill="#e8e3df" />
            </svg>
          }
        />
      </TaskApp>
      <TaskApp label="Chrome, third profile" open>
        <Chrome
          badge={
            <svg viewBox="0 0 20 20" className={`${profile} bg-[#f0dc98]`}>
              <path d="M2 8c2-2 1-4 5-5 4-2 10 0 12 4-3 1-5 0-7 1s-6 1-10 0z" fill="#5a7a3c" />
              <path d="M4 16v-3l2-2h6l3 2v3z" fill="#344f6f" />
              <path d="M0 16h20v4H0z" fill="#6b6a2d" />
            </svg>
          }
        />
      </TaskApp>
      <TaskApp label="Chrome, profile E" open current><Chrome badge={<span className={`${profile} bg-[#5b67c0]`}>E</span>} /></TaskApp>

      <div className="ml-auto flex items-center text-[17px]">
        <svg viewBox="0 0 30 26" className="h-[26px] w-[30px]">
          <circle cx="15" cy="13" r="12.500" fill="#fdb813" />
          <path d="M3 16c1 6 6 9.500 12 9.500S26 22 27.500 16z" fill="#f18a1d" />
          <path d="M5 7h14M2 12h15M0 17h25M3 22h21" stroke="#ffe9b8" strokeWidth="1.800" />
          <circle cx="23" cy="7" r="7" fill="#c42b1c" />
          <text x="23" y="11" fontSize="11" textAnchor="middle" fill="#fff">1</text>
        </svg>
        <span className="ml-[11px] text-lg whitespace-nowrap">17°C&ensp;Haze</span>
        <div className="ml-7 flex items-center gap-[11px]">
          <ChevronUp className="h-5 w-5" strokeWidth={1.600} />
          <svg viewBox="0 0 18 18" className="h-[18px] w-[18px]" fill="none" stroke="#fff" strokeWidth="1.400">
            <rect x="3" y="4.500" width="8" height="9" rx="1.500" /><path d="M11 8l4-2.500v7L11 10M4 2c2-1.500 5-1.500 7 0M4 16c2 1.500 5 1.500 7 0" />
          </svg>
          <svg viewBox="0 0 18 18" className="h-[18px] w-[18px]" fill="none" stroke="#ddd" strokeWidth="1.400">
            <path d="M1 16C1 8 8 2 17 2M5 17C5 11 10 6 17 6M9 17c0-4 4-7 8-7" /><circle cx="15" cy="15" r="1.500" fill="#fff" />
          </svg>
          <svg viewBox="0 0 22 20" className="h-5 w-5" fill="none" stroke="#fff" strokeWidth="1.300">
            <path d="M1 3l19-2v12M1 3v14h10M7 9c1-4 6-4 7-1M14 5v3.500h-3M7 14v-3" /><circle cx="17" cy="15" r="4.500" fill="#2f76c2" stroke="none" />
          </svg>
          <svg viewBox="0 0 19 12" className="h-3 w-[19px]">
            <rect x=".6" y=".6" width="15.500" height="10.800" fill="none" stroke="#fff" strokeWidth="1.200" />
            <path d="M2.500 2.500h12v7h-12zM17 4h2v4h-2z" fill="#fff" />
          </svg>
          <Volume2 className="h-5 w-5" strokeWidth={1.500} />
        </div>
        <span className="ml-3 text-[15px]">ENG</span>
        <div className="ml-4 flex flex-col items-center text-[15px] leading-[23px] whitespace-nowrap">
          <span>15:53</span>
          <span>08-01-2025</span>
        </div>
        <button aria-label="Notifications" className="mr-[25px] ml-[22px]">
          <svg viewBox="0 0 20 20" className="h-5 w-5" fill="none" stroke="#fff" strokeWidth="1.400"><path d="M1 1h18v14.500h-6L10 18.500 7 15.500H1z" /></svg>
        </button>
        <span className="mr-[5px] h-full w-px bg-[#6a6a6a]" />
      </div>
    </footer>
  );
}

export default function App() {
  return (
    <div className="flex h-screen flex-col overflow-hidden font-['Open_Sans','Noto_Sans',sans-serif] text-[#1c2b33]">
      <BrowserBar />
      <div className="flex min-h-0 flex-1">
        <SideNav />
        <main className="flex min-w-0 flex-1 flex-col bg-[radial-gradient(ellipse_at_top_left,#fbf0f0_0%,#f2ebf1_40%,transparent_75%),linear-gradient(to_bottom_right,#efe9f2_25%,#e6edf8_50%,#e4f0f8_75%,#e6f6ec)] pt-[15px] pr-2.5 pb-[13px] pl-[9px]">
          <PageHeader />
          <Tabs />
          <section className="flex min-h-0 flex-1 flex-col overflow-hidden rounded-b-xl bg-white shadow-sm">
            <Toolbar />
            <CampaignTable />
          </section>
        </main>
        <aside className="flex w-[55px] shrink-0 flex-col items-center gap-[34px] bg-[#1c2b33] pt-6 text-[#d5dadd] shadow-[-2px_0_4px_rgba(0,0,0,0.2)]">
          <button aria-label="Charts"><BarsIcon className="h-5 w-5" /></button>
          <button aria-label="Edit"><Pencil className="h-5 w-5" strokeWidth={1.500} /></button>
          <button aria-label="History"><Clock className="h-[22px] w-[22px]" strokeWidth={1.500} /></button>
        </aside>
      </div>
      <Taskbar />
    </div>
  );
}
